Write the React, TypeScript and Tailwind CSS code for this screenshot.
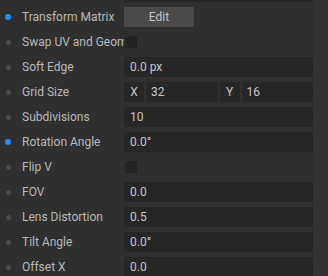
const font = { fontFamily: "Roboto, 'Liberation Sans', sans-serif" };

type Row =
  | { label: string; active?: boolean; kind: "button"; text: string }
  | { label: string; active?: boolean; kind: "check" }
  | { label: string; active?: boolean; kind: "input"; value: string }
  | { label: string; active?: boolean; kind: "xy"; x: string; y: string };

const rows: Row[] = [
  { label: "Transform Matrix", active: true, kind: "button", text: "Edit" },
  { label: "Swap UV and Geometry", kind: "check" },
  { label: "Soft Edge", kind: "input", value: "0.0 px" },
  { label: "Grid Size", kind: "xy", x: "32", y: "16" },
  { label: "Subdivisions", kind: "input", value: "10" },
  { label: "Rotation Angle", active: true, kind: "input", value: "0.0°" },
  { label: "Flip V", kind: "check" },
  { label: "FOV", kind: "input", value: "0.0" },
  { label: "Lens Distortion", kind: "input", value: "0.5" },
  { label: "Tilt Angle", kind: "input", value: "0.0°" },
  { label: "Offset X", kind: "input", value: "0.0" },
];

const Control = ({ row }: { row: Row }) => {
  if (row.kind === "button") {
    return (
      <div className="w-[70px] h-full bg-[#4a4a4a] flex items-center justify-center text-[#c4c4c4]">
        {row.text}
      </div>
    );
  }
  if (row.kind === "check") {
    return (
      <div className="h-full flex items-center pl-px">
        <div className="w-[12px] h-[12px] bg-[#232323]" />
      </div>
    );
  }
  if (row.kind === "xy") {
    return (
      <div className="flex h-full gap-[2px] text-[#c8c8c8]">
        <div className="w-[20px] bg-[#262626] flex items-center justify-center">X</div>
        <div className="flex-1 bg-[#262626] flex items-center pl-[5px]">{row.x}</div>
        <div className="w-[20px] bg-[#262626] flex items-center justify-center">Y</div>
        <div className="flex-1 bg-[#262626] flex items-center pl-[5px]">{row.y}</div>
      </div>
    );
  }
  return (
    <div className="h-full bg-[#262626] flex items-center pl-[6px] text-[#c8c8c8]">
      {row.value}
    </div>
  );
};

export default function App() {
  return (
    <div
      className="w-[328px] h-[276px] overflow-hidden bg-[#2f2f2f] flex text-[12px]"
      style={font}
    >
      {/* properties */}
      <div className="w-[313px] flex flex-col gap-[5px]">
        {/* tail of the row above */}
        <div className="h-[2px] ml-[124px] bg-[#262626] shrink-0" />
        {rows.map((row) => (
          <div key={row.label} className="h-[20px] shrink-0 flex items-center">
            <div className="w-[22px] flex items-center pl-[5px]">
              {row.active ? (
                <div className="w-[6px] h-[6px] rounded-full bg-[#1e8fff]" />
              ) : (
                <div className="w-[5px] h-[5px] rounded-full bg-[#4c4c4c] ml-[0.5px]" />
              )}
            </div>
            <div className="w-[102px] overflow-hidden whitespace-nowrap text-[#b9b9b9]">
              {row.label}
            </div>
            <div className="flex-1 h-full">
              <Control row={row} />
            </div>
          </div>
        ))}
      </div>
      {/* scrollbar track */}
      <div className="w-[15px] bg-[#333333]" />
    </div>
  );
}
